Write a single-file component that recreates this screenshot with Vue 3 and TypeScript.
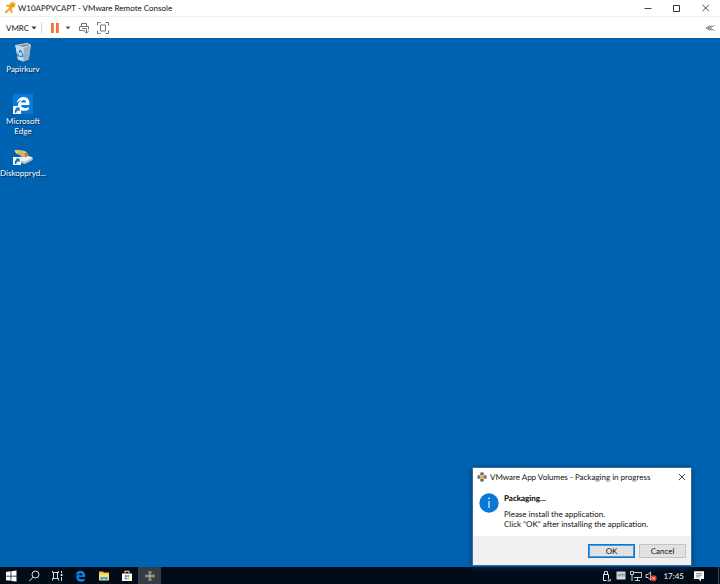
<script setup lang="ts">
import { ref } from 'vue'

const dialogOpen = ref(true)
const paused = ref(false)
const closeDialog = () => { dialogOpen.value = false }
</script>

<template>
  <div class="console">
    <header class="titlebar">
      <svg class="app-icon" viewBox="0 0 12 12" aria-hidden="true">
        <path d="M2.2 3.8h3.2L9 .8M7.4 4.4L6.6 7 8 10.6M6 6.4L1.4 10.8" fill="none" stroke="#f5a21b" stroke-width="2" />
        <path d="M6.4.6h4.8v4.8H6.4z" fill="#f8ab22" />
        <path d="M7.4 3.4l2.2-1.2-.8 2.4z" fill="#dc5a1b" />
        <path d="M4.8 3.4h3.4v3.8H4.8z" fill="#f5a21b" />
      </svg>
      <h1 class="window-title">W10APPVCAPT - VMware Remote Console</h1>
      <div class="window-buttons">
        <button type="button" aria-label="Minimize"><svg viewBox="0 0 10 10"><path d="M1.5 5.5h7" stroke="#444" /></svg></button>
        <button type="button" aria-label="Maximize"><svg viewBox="0 0 10 10"><path d="M1.5 2.5h6v6h-6z" stroke="#333" fill="none" /></svg></button>
        <button type="button" aria-label="Close"><svg viewBox="0 0 10 10"><path d="M1.5 1.8l6.4 6.4m0-6.4L1.5 8.2" stroke="#333" stroke-width=".9" /></svg></button>
      </div>
    </header>

    <nav class="toolbar">
      <button type="button" class="menu">VMRC<svg class="caret" viewBox="0 0 6 4"><path d="M.5.5h5L3 3.5z" fill="#333" /></svg></button>
      <span class="separator"></span>
      <button type="button" class="pause" aria-label="Pause" :aria-pressed="paused" @click="paused = !paused">
        <svg viewBox="0 0 10 12"><path d="M1 1h2.8v10H1zM6 1h2.8v10H6z" fill="#f37233" /></svg>
      </button>
      <button type="button" class="power" aria-label="Power options"><svg class="caret" viewBox="0 0 6 4"><path d="M.5.5h5L3 3.5z" fill="#54626c" /></svg></button>
      <button type="button" class="tool" aria-label="Send Ctrl+Alt+Del">
        <svg viewBox="0 0 12 12" fill="none" stroke="#6b7880">
          <path d="M3.5 4.5v-3h5v3M6.5 8.5h-5v-4h9v3M4 6.5h4" />
          <path d="M8.5 6.5v4.5M6.3 9l2.2 2.2L10.7 9" />
        </svg>
      </button>
      <button type="button" class="tool full" aria-label="Full screen">
        <svg viewBox="0 0 12 12" fill="none" stroke="#6b7880">
          <path d="M.5 3.5v-3h3M8.5.5h3v3M11.5 8.5v3h-3M3.5 11.5h-3v-3M3.5 3h5v6h-5z" />
        </svg>
      </button>
      <button type="button" class="collapse" aria-label="Collapse toolbar">
        <svg viewBox="0 0 10 6" fill="none" stroke="#68757d" stroke-width=".8"><path d="M5 .6L.8 3 5 5.4M9.4.6L4.4 3l5 2.4M7.2.6L2.6 3l4.6 2.4" /></svg>
      </button>
    </nav>

    <main class="desktop">
      <div class="shortcuts">
        <button type="button" class="shortcut">
          <svg viewBox="0 0 22 22" aria-hidden="true">
            <path d="M3.3 4.5l12-2.3 3.5 2-2 14.2-5.3 2.2-5.5-2z" fill="#b3cadb" />
            <path d="M3.3 4.5l8.6 2.1-.4 14-5.5-2z" fill="#c6d7e2" />
            <path d="M11.9 6.6l6.9-2.4-2 14.2-5.3 2.2z" fill="#94b1c7" />
            <path d="M3.3 4.5l12-2.3 3.5 2-6.9 2.4z" fill="#8599a6" stroke="#dce7ee" stroke-width=".7" />
            <path d="M7 11.5l1.2-2L10 11.5M10.4 12.5l.3 2.7-2.5.4M6.2 12.6l-.2 2.2 1.4.6" fill="none" stroke="#1680dc" stroke-width="1.3" />
          </svg>
          <span>Papirkurv</span>
        </button>
        <button type="button" class="shortcut">
          <svg viewBox="0 0 22 22" aria-hidden="true">
            <path d="M1 1h20v20H1z" fill="#0879d8" />
            <path fill-rule="evenodd" d="M4.8 10.2C5.2 6.4 7.9 4 11.4 4c4 0 6 2.6 6 6.1v1.8H9c.2 2.2 1.8 3 4 3 1.5 0 2.8-.4 3.8-1v2.7c-1.3.8-2.8 1.2-4.6 1.2-4 0-6.2-2.1-6.2-5.4 0-2.3 1.2-4.1 3.2-5.1-2 .3-3.5 1.3-4.4 2.9zM9.1 9.6h5c0-1.8-.9-2.7-2.4-2.7S9.4 7.9 9.1 9.6z" fill="#fff" />
            <path d="M1 13h8v8H1z" fill="#f3f6f8" />
            <path d="M3 20c-.4-2.3.2-3.7 1.6-4.4L3.6 14.4h4v4l-1.2-1.2C4.8 17.6 4.2 18.5 4.2 20z" fill="#176bb0" />
          </svg>
          <span>Microsoft<br>Edge</span>
        </button>
        <button type="button" class="shortcut">
          <svg viewBox="0 0 22 22" aria-hidden="true">
            <path d="M5 14.5l8-4.5 7.7 2.6v2.3L13 19l-8-2z" fill="#b7c2c9" />
            <path d="M5 14.5l8-4.5 7.7 2.6-7.9 4.2z" fill="#edf1f3" />
            <path d="M2.5 5l3.4-.3 3.4.5 5.2 1.8 2 3.2-3.2 2.3-5.2-1.9-3.9-2.2z" fill="#d3b46e" />
            <path d="M2.5 5l4.3 2-2.6 1.4zM9.3 5.2l5.2 1.8-1.2 1.4z" fill="#ecd28f" />
            <path d="M12.4 8.4l2.1-1.4 2 3.2-3.2 2.3z" fill="#a8864a" />
            <path d="M1 12h8v8H1z" fill="#f3f6f8" />
            <path d="M3 19c-.4-2.3.2-3.7 1.6-4.4L3.6 13.4h4v4l-1.2-1.2C4.8 16.6 4.2 17.5 4.2 19z" fill="#176bb0" />
          </svg>
          <span>Diskoppryd...</span>
        </button>
      </div>

      <section v-if="dialogOpen" class="dialog" role="dialog" aria-labelledby="dialog-title">
        <header class="dialog-title">
          <svg viewBox="0 0 12 12" aria-hidden="true">
            <path d="M4.4 1h3.2v2.6H4.4zM4.4 8.4h3.2V11H4.4zM1 4.4h2.6v3.2H1zM8.4 4.4H11v3.2H8.4z" fill="#65727c" stroke="#65727c" stroke-width=".9" stroke-linejoin="round" />
            <path d="M6 3.3L8.7 6 6 8.7 3.3 6z" fill="#f4a62a" />
          </svg>
          <h2 id="dialog-title">VMware App Volumes - Packaging in progress</h2>
          <button type="button" aria-label="Close" @click="closeDialog"><svg viewBox="0 0 10 10"><path d="M1.8 1.8l6.4 6.4m0-6.4L1.8 8.2" stroke="#333" stroke-width=".9" /></svg></button>
        </header>
        <div class="dialog-body">
          <svg viewBox="0 0 20 20" aria-hidden="true"><circle cx="10" cy="10" r="9.7" fill="#0878d7" /><path d="M10 8v7" stroke="#fff" stroke-width="1.1" /><circle cx="10" cy="5.4" r=".8" fill="#fff" /></svg>
          <div class="message">
            <strong>Packaging...</strong>
            <p>Please install the application.<br>Click "OK" after installing the application.</p>
          </div>
        </div>
        <footer class="dialog-actions">
          <button type="button" class="primary" @click="closeDialog">OK</button>
          <button type="button" @click="closeDialog">Cancel</button>
        </footer>
      </section>
    </main>

    <footer class="taskbar">
      <div class="apps">
        <button type="button" aria-label="Start"><svg viewBox="0 0 12 12"><path d="M0 2l4.6-.7v4.4H0zM5.3 1.2L10.5.5v5.2H5.3zM0 6.4h4.6v4.4L0 10.2zM5.3 6.4h5.2v5.2l-5.2-.7z" fill="#fff" /></svg></button>
        <button type="button" aria-label="Search"><svg viewBox="0 0 12 12" fill="none" stroke="#e6e8eb"><circle cx="6.5" cy="4.5" r="3.5" /><path d="M4 7.2L.5 11" /></svg></button>
        <button type="button" aria-label="Task view"><svg viewBox="0 0 12 12" fill="none" stroke="#d7dbe0"><path d="M.5 1v1.5h6V1M1.5 2.5v6M5.5 2.5v6M.5 10.5V8.5h6v2M9.5 1v2.2M9.5 7v4" /><path d="M8.7 4.2h1.8V6H8.7z" fill="#fff" stroke="none" /></svg></button>
        <button type="button" aria-label="Microsoft Edge"><svg viewBox="4 2 16 17"><path fill-rule="evenodd" d="M4 10.2C4.5 5.6 7.5 3 11.3 3c4.3 0 6.7 2.9 6.7 7v2H9c.2 2.2 1.8 3.1 4.1 3.1 1.7 0 3.1-.5 4.1-1.2v3.4c-1.3.8-3 1.3-5 1.3-4.2 0-6.8-2.3-6.8-6 0-2.5 1.4-4.6 3.6-5.6C6.7 7.3 5.1 8.4 4 10.2zM9 9.4h4.9c0-1.8-.8-2.8-2.3-2.8S9.3 7.7 9 9.4z" fill="#0b80df" /></svg></button>
        <button type="button" aria-label="File Explorer"><svg viewBox="0 0 12 12"><path d="M1 1.5h4l1 1h5v7H1z" fill="#f2b82e" /><path d="M1 3.5h10v7H1z" fill="#ffdc78" /><path d="M2.5 7h7v3.8H7.7V9H4.3v1.8H2.5z" fill="#3aa1e8" /></svg></button>
        <button type="button" aria-label="Microsoft Store"><svg viewBox="0 0 12 12"><path d="M1 3.5h10V11H1z" fill="#fff" /><path d="M4 3.5V1.2h4v2.3" stroke="#e8eaed" fill="none" /><path d="M3.8 5h2v2h-2z" fill="#f35b42" /><path d="M6.3 5h2v2h-2z" fill="#78b83c" /><path d="M3.8 7.5h2v2h-2z" fill="#2196de" /><path d="M6.3 7.5h2v2h-2z" fill="#f2b82e" /></svg></button>
        <button type="button" class="active" aria-label="VMware App Volumes"><svg viewBox="0 0 12 12"><path d="M4.4 1h3.2v3H4.4zM4.4 8h3.2v3H4.4zM1 4.4h3v3.2H1zM8 4.4h3v3.2H8z" fill="#788692" /><path d="M6 3.7L8.3 6 6 8.3 3.7 6z" fill="#f4a62a" /></svg></button>
      </div>
      <div class="tray">
        <button type="button" aria-label="Eject hardware"><svg viewBox="0 0 12 12" fill="none" stroke="#e1e4e8"><path d="M4.5 4V1.5h3V4M3.5 4.5h5v5M3.5 4v6.5h3M7.5 10.8h2.8V9" /></svg></button>
        <button type="button" aria-label="VMware Tools"><svg viewBox="0 0 12 12"><path d="M1.5 1.5h9v8h-9z" fill="#d6d9dd" /><path d="M2.6 4l1 2.3 1-2.3M5.6 6.5V4.3h1.8v2.2M7.4 4.3h1.8v2.2" stroke="#69737c" fill="none" stroke-width=".7" /></svg></button>
        <button type="button" aria-label="Network"><svg viewBox="0 0 12 12" fill="none" stroke="#e1e4e8"><path d="M4 2.5h7.5v5H4M7.5 8v2M5 10.5h5M.5 1.5h3v3h-3zM2 5v6" stroke-width=".9" /></svg></button>
        <button type="button" aria-label="Volume muted"><svg viewBox="0 0 12 12"><path d="M1 4.5h2L5.6 2v8L3 7.5H1z" fill="none" stroke="#e1e4e8" stroke-width=".9" /><circle cx="8.6" cy="8.3" r="3" fill="#e43c38" /><path d="M7.5 7.2l2.2 2.2m0-2.2L7.5 9.4" stroke="#fff" stroke-width=".8" /></svg></button>
        <time datetime="17:45">17:45</time>
        <button type="button" class="notifications" aria-label="Notifications"><svg viewBox="0 0 12 12"><path d="M1 1.3h10v7.8H8v2.5L5.7 9.1H1z" fill="#fff" /><path d="M3 3.5h6M3 5.2h6M3 6.9h4" stroke="#59616b" stroke-width=".7" /></svg></button>
        <button type="button" class="show-desktop" aria-label="Show desktop"></button>
      </div>
    </footer>
  </div>
</template>

<style>
body { margin: 0; }
</style>

<style scoped>
* { box-sizing: border-box; }
.console {
  display: flex;
  flex-direction: column;
  height: 100vh;
  overflow: hidden;
  background: #fff;
  color: #111;
  font-family: Lato, "Open Sans", sans-serif;
  font-size: 8px;
  line-height: 10px;
  text-rendering: geometricPrecision;
}
button {
  display: flex;
  align-items: center;
  justify-content: center;
  border: 0;
  padding: 0;
  background: transparent;
  color: inherit;
  font: inherit;
  text-rendering: inherit;
}
svg { display: block; flex: none; }
h1, h2, p { margin: 0; font: inherit; white-space: nowrap; }

.titlebar {
  display: flex;
  align-items: center;
  flex: none;
  height: 17px;
  padding-left: 4px;
  border-bottom: 1px solid #f0f0f0;
}
.app-icon { width: 12px; height: 12px; }
.window-title { margin-left: 2px; }
.window-buttons { display: flex; margin-left: auto; }
.window-buttons button { width: 29px; height: 16px; }
.window-buttons svg { width: 10px; height: 10px; }

.toolbar {
  display: flex;
  align-items: center;
  flex: none;
  height: 21px;
  padding: 0 5px 0 6px;
}
.menu { gap: 2px; }
.caret { width: 6px; height: 4px; }
.separator { width: 1px; height: 12px; margin: 0 8px 0 4px; background: #d8d8d8; }
.pause svg { width: 10px; height: 12px; }
.power { margin-left: 5px; }
.tool { margin-left: 7px; }
.tool svg { width: 12px; height: 12px; }
.collapse { margin-left: auto; }
.collapse svg { width: 10px; height: 6px; }

.desktop {
  position: relative;
  flex: 1;
  min-height: 0;
  background: #0063b1;
}
.shortcuts {
  display: flex;
  flex-direction: column;
  align-items: center;
  width: 46px;
  padding-top: 3px;
}
.shortcut {
  flex-direction: column;
  justify-content: flex-start;
  height: 52px;
  gap: 1px;
  color: #fff;
  line-height: 10px;
  text-align: center;
  text-shadow: 1px 1px 1px #00264b;
  white-space: nowrap;
}
.shortcut svg { width: 22px; height: 22px; }

.dialog {
  position: absolute;
  right: 28px;
  bottom: 1px;
  width: 220px;
  border: 1px solid #3b6c98;
  background: #fff;
  box-shadow: 0 1px 6px #003c70;
}
.dialog-title {
  display: flex;
  align-items: center;
  height: 17px;
  padding: 0 4px;
}
.dialog-title svg { width: 10px; height: 10px; }
.dialog-title h2 { margin-left: 3px; }
.dialog-title button { margin-left: auto; }
.dialog-body {
  display: flex;
  gap: 5px;
  height: 51px;
  padding: 8px 6px 0;
}
.dialog-body svg { width: 20px; height: 20px; }
.message strong { display: block; color: #000; font-weight: 700; }
.message p { margin-top: 6px; }
.dialog-actions {
  display: flex;
  justify-content: flex-end;
  align-items: center;
  gap: 4px;
  height: 29px;
  padding: 0 5px;
  background: #f0f0f0;
}
.dialog-actions button {
  width: 47px;
  height: 14px;
  border: 1px solid #c4c4c4;
  background: #e1e1e1;
}
.dialog-actions .primary { border-color: #0878d7; box-shadow: inset 0 0 0 1px #4c9bdd; }

.taskbar {
  display: flex;
  justify-content: space-between;
  flex: none;
  height: 17px;
  background: #020c18;
  color: #fff;
}
.apps, .tray { display: flex; align-items: center; }
.apps button { width: 23px; height: 17px; }
.apps svg, .tray svg { width: 12px; height: 12px; }
.apps .active { background: #343c45; }
.tray { gap: 3px; padding-right: 1px; }
.tray time { margin-left: 3px; }
.tray .notifications { margin-left: 6px; }
.tray .show-desktop { width: 11px; height: 17px; border-right: 1px solid #3f4954; }
</style>
